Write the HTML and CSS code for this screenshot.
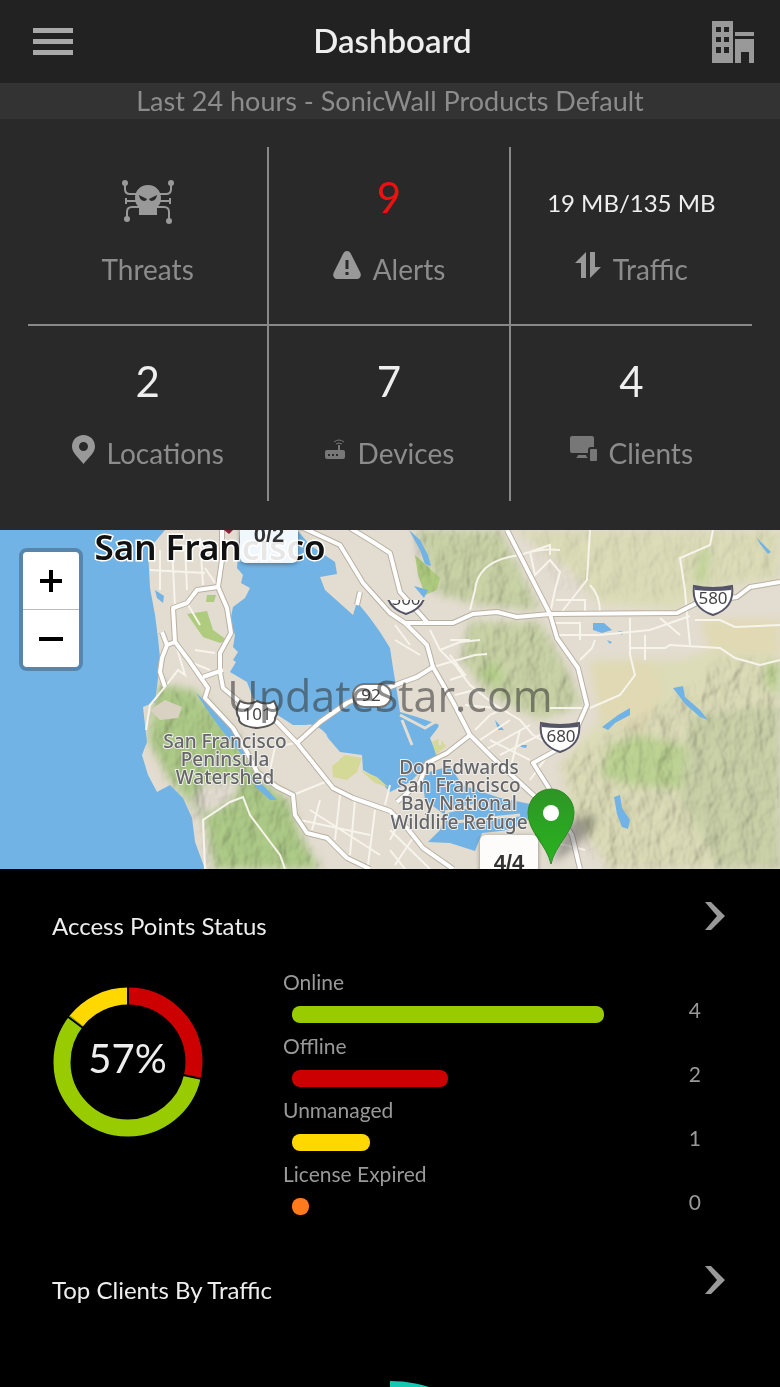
FILE: index.html
```html
<!DOCTYPE html>
<html lang="en">
<head>
    <meta charset="utf-8" />
    <meta name="viewport" content="width=device-width, initial-scale=1" />
    <title>Dashboard</title>
    <link rel="stylesheet" href="styles.css">
</head>

<body>
    <header class="topbar">
        <button class="icon-btn" type="button" aria-label="Menu">
            <svg width="40" height="28" viewBox="0 0 40 28" fill="#a9a9a9">
                <path d="M0 0h40v5H0zM0 11h40v5H0zM0 22h40v5H0z" />
            </svg>
        </button>
        <h1>Dashboard</h1>
        <button class="icon-btn" type="button" aria-label="Tenants">
            <svg width="42" height="42" viewBox="0 0 42 42" fill="#999" fill-rule="evenodd">
                <path d="M0 0h21v42H0zM4 6v5h5V6zM12 6v5h5V6zM4 16v5h5v-5zM12 16v5h5v-5zM4 26v6h5v-6zM12 26v6h5v-6z" />
                <path d="M23 11h19v4H23zM23 18h19v24h-5V31h-8v11h-6z" />
            </svg>
        </button>
    </header>

    <p class="period">Last 24 hours - SonicWall Products Default</p>

    <nav class="stats">
        <a class="stat" href="#threats">
            <span class="value value-low">
                <svg width="54" height="46" viewBox="0 0 54 46" fill="#999">
                    <g fill="none" stroke="#999" stroke-width="2">
                        <path d="M4 4v6q0 5 5 5h10M50 4v6q0 5-5 5H35M6 40v-7q0-5 5-5h10M48 42v-9q0-5-5-5H33" />
                        <path d="M5 22h12M37 22h12M5 19v6M49 19v6" />
                    </g>
                    <circle cx="4" cy="4" r="3" />
                    <circle cx="50" cy="4" r="3" />
                    <circle cx="6" cy="40" r="3" />
                    <circle cx="48" cy="42" r="3" />
                    <path d="M27 6c8 0 13 6 13 13 0 4-1 7-4 9v8H18v-8c-3-2-4-5-4-9C14 12 19 6 27 6z" />
                    <path d="M18 16l8 4c-1 3-7 3-8-4zM36 16l-8 4c1 3 7 3 8-4z" fill="#292929" />
                </svg>
            </span>
            <span class="label">Threats</span>
        </a>
        <a class="stat" href="#alerts">
            <span class="value value-alert">9</span>
            <span class="label">
                <svg width="28" height="28" viewBox="0 0 28 28">
                    <path d="M14 0c2 0 3 1 4 3l9 18c2 4 0 7-3 7H4c-3 0-5-3-3-7l9-18c1-2 2-3 4-3z" fill="#999" />
                    <path d="M14 9v9M14 21v3" stroke="#292929" stroke-width="3" />
                </svg>
                Alerts
            </span>
        </a>
        <a class="stat" href="#traffic">
            <span class="value value-low value-small">19 MB/135 MB</span>
            <span class="label">
                <svg width="26" height="28" viewBox="0 -1 26 28" fill="#999">
                    <path d="M11 0v26H6V11H0zM15 0h5v15h6L15 26z" />
                </svg>
                Traffic
            </span>
        </a>
        <a class="stat" href="#locations">
            <span class="value">2</span>
            <span class="label">
                <svg width="23" height="29" viewBox="0 0 23 29">
                    <path fill="#999" fill-rule="evenodd" d="M11.500 0C18 0 23 5 23 11.500 23 18 17 22 11.500 29 6 22 0 18 0 11.500 0 5 5 0 11.500 0zm0 7a4.500 4.500 0 1 0 0 9 4.500 4.500 0 1 0 0-9z" />
                </svg>
                Locations
            </span>
        </a>
        <a class="stat" href="#devices">
            <span class="value">7</span>
            <span class="label">
                <svg width="22" height="24" viewBox="-1 -4 22 24">
                    <path d="M2 11h11V6h2v5h3q2 0 2 2v5q0 2-2 2H2q-2 0-2-2v-5q0-2 2-2z" fill="#777" />
                    <path d="M3 15h2v2H3zM7 15h2v2H7zM11 15h2v2h-2z" fill="#292929" />
                    <path d="M9 3q5-4 10 0M11 5q3-2 6 0" fill="none" stroke="#777" />
                </svg>
                Devices
            </span>
        </a>
        <a class="stat" href="#clients">
            <span class="value">4</span>
            <span class="label">
                <svg width="27" height="26" viewBox="0 -1 27 26" fill="#777">
                    <path d="M2 0h20q2 0 2 2v9h-3q-3 0-3 3v3H2q-2 0-2-2V2q0-2 2-2zM8 19h8q1 3 2 3H6q1 0 2-3z" />
                    <rect x="20" y="13" width="7" height="12" rx="1" />
                </svg>
                Clients
            </span>
        </a>
    </nav>

    <section class="map" aria-label="Map">
        <svg class="map-tiles" viewBox="0 0 780 339" preserveAspectRatio="xMidYMid slice">
            <defs>
                <filter id="soft" x="-20%" y="-20%" width="140%" height="140%">
                    <feGaussianBlur stdDeviation="4" />
                </filter>
                <!-- hill shading -->
                <filter id="relief" x="0" y="0" width="100%" height="100%">
                    <feTurbulence type="fractalNoise" baseFrequency="0.06 0.04" numOctaves="3" seed="8" result="n" />
                    <feDiffuseLighting in="n" surfaceScale="6" lighting-color="#fff">
                        <feDistantLight azimuth="205" elevation="50" />
                    </feDiffuseLighting>
                </filter>
                <mask id="hillmask">
                    <g filter="url(#soft)" fill="#fff">
                        <path d="M158 150L195 165 240 205 262 250 290 270 300 300 325 339 205 339 192 285 160 240 148 200z" />
                        <path d="M415 0L500 0 540 80 480 75 440 65 420 50z" />
                        <path d="M470 92L540 92 568 140 580 175 540 185 490 165 460 130z" />
                        <path fill="#777" d="M520 0L780 0 780 45 700 55 660 70 600 65 560 60z" />
                        <path d="M690 160L720 130 780 130 780 339 600 339 575 290 560 235 590 215z" />
                    </g>
                </mask>
                <g id="highways" fill="none" stroke-linejoin="round">
                    <path d="M222 0V30L218 57 227 78 231 103 220 123 220 142 223 158 240 172 277 192 297 213 333 258 353 268 390 281 407 298 423 318 453 339" />
                    <path d="M218 57L197 60 187 73 173 78 175 112 190 132 208 158 205 168 233 198 247 222 257 242 277 257 293 265 295 285 307 303 327 308 347 328 370 339" />
                    <path d="M203 147L223 140M175 112L167 115 162 102M167 115L162 128 160 142 165 157" />
                    <path d="M297 213L320 192 347 173 360 167 390 157 417 147 433 137" />
                    <path d="M297-5L340 15 363 53 390 83 405 93 427 115 433 137 453 172 470 205 493 228 530 262 562 290 572 305 580 339" />
                    <path d="M350-2L373 12 390 23 400 62 427 92M405 93H453L473 84 497 82 517 87 550 84 677 83 697 73 737 67 750 57 780 52" />
                    <path d="M507 0L550 84 557 108 578 138 587 175 577 198 560 218 533 233 547 255 570 295" />
                    <path d="M470 205L447 223 427 233 420 252 397 272M357 75L360 62" />
                </g>
                <g id="shield">
                    <path d="M-19-13Q0-9 19-13Q22 9 0 16Q-22 9-19-13z" fill="#fff" stroke="#555568" stroke-width="2" />
                    <path d="M-18-13Q0-9 18-13V-9Q0-7-18-9z" fill="#555568" />
                </g>
                <clipPath id="tile-edge"><path d="M380 70h50v30h-50z" /></clipPath>
                <linearGradient id="pin" x2="0" y2="1">
                    <stop offset="0" stop-color="#2e9526" />
                    <stop offset="1" stop-color="#29b41f" />
                </linearGradient>
            </defs>

            <rect width="780" height="339" fill="#e3dcd0" />

            <!-- dry hills and parks -->
            <g filter="url(#soft)">
                <path fill="#dcdcb8" d="M515 0H780V50L700 60 680 80 600 75 570 40zM590 130L680 130 740 110 780 130V339H610L575 290 560 235 600 190z" />
                <path fill="#c9d3a6" d="M415 0H500L540 80 480 75 440 65zM470 92L540 92 568 140 582 175 540 190 490 165 460 130z" />
                <path fill="#e0d9b4" d="M590 135L650 130 665 160 640 205 600 190zM700 90L780 90 780 125 710 120z" />
                <path fill="#aecb88" d="M158 155L195 160 235 205 262 250 290 272 300 305 320 339 215 339 205 290 170 250 148 210z" />
                <path fill="#bdd393" d="M610 215L640 205 700 220 715 245 690 260 630 255 600 245zM765 135L780 130V165L765 155zM700 22L710 18 705 55 695 50z" />
                <path fill="#cbd2a9" d="M690 185L780 175V339H720L680 270z" />
                <path fill="#b4cf88" d="M477 145L495 130 505 155 485 150z" />
                <path fill="#e3dcd0" d="M205 252L240 250 235 268 205 285 192 270z" />
            </g>
            <path fill="#aecb7e" d="M187 84L207 81 213 100 227 110 220 113 203 107zM415 25L440 48 437 60 425 65 418 45zM207 65L216 65 214 72 206 72z" />

            <rect width="780" height="339" filter="url(#relief)" mask="url(#hillmask)" class="relief" />

            <!-- ocean, bay and lakes -->
            <g fill="#71b3e5">
                <path d="M0 0H165L148 20 150 58 155 85 158 108 160 128 158 148 155 172 143 177 145 195 147 212 142 225 148 245 157 262 170 255 183 268 192 288 195 312 205 339H0z" />
                <path d="M240 0H297L310 15 335 32 337 44 320 47 325 60 353 85 357 72 370 88 380 102 390 118 393 138 397 162 400 182 417 187 440 195 430 208 437 225 420 242 410 252 390 262 377 248 363 240 362 225 340 222 328 208 313 195 293 195 273 182 253 168 247 152 230 142 236 132 233 130 238 122 233 117 235 105 230 92 233 77 245 68 250 58 241 53 243 45 237 38z" />
                <path d="M422 244L450 236 462 255 500 268 530 274 528 290 510 300 482 303 475 321 450 313 428 312 440 300 445 285 425 270z" />
                <path d="M155 60L164 66 163 73 157 68zM196 163L210 175 223 188 245 220 243 226 227 207 212 187zM245 240L260 252 277 270 270 270 257 258z" />
                <path d="M409 0L420 10 428 25 431 36 425 34 420 20zM414 56L428 60 424 68zM593 93L604 93 612 100 602 103 593 100zM618 101L624 102 622 105zM607 110L612 112 610 114z" />
                <path d="M618 185L630 178 630 185 615 193 608 200 602 197zM673 158L683 156 685 167 700 180 708 190 700 187 685 174zM614 267L620 265 622 278 630 290 628 299 622 297 617 284zM757 8L771 22 768 24 760 14zM520 215L527 215 526 218 521 217zM495 190L504 200 498 200z" />
            </g>

            <!-- salt ponds and marshes -->
            <path fill="#d5d998" d="M332 236L345 225 362 228 357 242 347 250 333 247zM360 240L377 247 388 257 375 253zM432 212L440 208 446 216 436 225z" />
            <path fill="none" stroke="#e3dcd0" stroke-width="3" d="M300 200Q312 190 325 205Q330 215 318 222L305 214M335 217L320 240 338 230M400 185L425 198 435 192M402 190L412 215M440 190V215M445 282L475 275M455 292L520 285" />
            <path fill="#d9d2c2" d="M150 180L165 170 182 177 178 188 160 190z" />

            <!-- local streets -->
            <path class="streets" d="M150 40L205 43M160 20V60M172 15L175 78M185 15L187 60M200 8L203 55M205 38L218 57M187 73L200 95M175 112L185 145 178 140 165 157 150 175 146 200M190 132L210 140M195 120L215 123M205 339L203 290 230 272 243 267 250 285 265 305 280 325 285 339M295 213L275 217 270 240M293 265L330 250M300 290L370 305M320 270L312 300M340 265L335 310M355 270L350 325M375 280L368 335M310 280L380 325M390 255L385 275" />
            <path class="streets" d="M550 25L550 15 530 22 535 45 550 30 560 42 555 60 550 84M590 0L587 50 560 84M560 20Q540 18 520 25 478 30 475 60L470 80M590 55Q600 65 600 83M713 0L710 15 680 28 685 60 687 85 690 115M550 93H580L580 110M555 105H600L650 100 690 86M630 88V125 L635 145 620 165 590 178M645 105V130M630 118H665L670 115 720 118 735 128 760 135 780 130M660 88L680 105M695 90L720 90 735 97 780 95M580 130L592 118 595 110M556 70H585V84" />
            <path class="streets" d="M430 100L440 120 455 135 470 155 495 175 520 190 533 205 550 215M440 120L460 112 480 110M433 137L475 125 487 124M450 150L465 145 450 125M455 165L475 160M465 175L495 178M475 200L490 185 500 180M480 210L510 190M485 220L530 195M500 225L540 205M510 240L520 200M530 230L490 210M450 110H470M395 50L410 75M390 300L430 339M390 320L405 339M400 290L390 310M415 305L395 335M530 250L555 215M545 310L585 320M395 110L420 125M395 95L410 115M550 178H587" />

            <use href="#highways" stroke="#b9b0a3" stroke-width="6" />
            <use href="#highways" stroke="#fff" stroke-width="4" />

            <!-- road shields -->
            <use href="#shield" x="713" y="69" />
            <use href="#shield" x="560" y="206" />
            <g clip-path="url(#tile-edge)">
                <use href="#shield" x="406" y="68" />
                <text class="shield-text" x="406" y="75">500</text>
            </g>
            <path d="M240 171Q248 176 257 171 267 176 274 171 280 181 275 188 276 196 257 198 238 196 239 188 234 181 240 171z" fill="#fff" stroke="#555" stroke-width="2" />
            <rect x="353" y="154" width="38" height="23" rx="11" fill="#fff" stroke="#777" stroke-width="2" />
            <text class="shield-text" x="713" y="74">580</text>
            <text class="shield-text" x="561" y="212">680</text>
            <text class="shield-text" x="257" y="190">101</text>
            <text class="shield-text" x="371" y="171">92</text>

            <!-- place names -->
            <text class="city" x="210" y="30">San Francisco</text>
            <g class="place">
                <text x="225" y="218">San Francisco</text>
                <text x="225" y="236">Peninsula</text>
                <text x="225" y="254">Watershed</text>
                <text x="459" y="244">Don Edwards</text>
                <text x="459" y="262">San Francisco</text>
                <text x="459" y="280">Bay National</text>
                <text x="459" y="299">Wildlife Refuge</text>
            </g>

            <!-- markers -->
            <path d="M224 0h9l-4 4z" fill="#8c1f3a" />
            <path d="M552 333L566 295Q590 280 597 288 590 310 552 333z" fill="#333" opacity=".4" filter="url(#soft)" />
            <path d="M551 334C547 315 528 302 528 283A23 24 0 0 1 574 283C574 302 555 315 551 334z" fill="url(#pin)" stroke="#2c8a25" />
            <circle cx="551" cy="283" r="8" fill="#fff" />
        </svg>

        <span class="tip tip-north">0/2</span>
        <span class="tip tip-south">4/4</span>

        <div class="zoom">
            <button type="button" aria-label="Zoom in">
                <svg width="24" height="24" viewBox="0 0 24 24"><path d="M12 1v22M1 12h22" stroke="#000" stroke-width="4" /></svg>
            </button>
            <button type="button" aria-label="Zoom out">
                <svg width="24" height="24" viewBox="0 0 24 24"><path d="M0 12h24" stroke="#000" stroke-width="4" /></svg>
            </button>
        </div>

        <span class="watermark">UpdateStar.com</span>
    </section>

    <section class="panel">
        <div class="panel-head">
            <h2>Access Points Status</h2>
            <a class="more" href="#access-points" aria-label="Access Points Status">
                <svg width="20" height="28" viewBox="0 0 20 28"><path d="M0 0h6l14 14L6 28H0l12-14z" fill="#999" /></svg>
            </a>
        </div>
        <div class="status">
            <div class="donut">
                <!-- circumference set to 7, one unit per access point -->
                <svg width="150" height="150" viewBox="0 0 150 150" fill="none" stroke-width="17">
                    <g transform="rotate(-90 75 75)">
                        <circle cx="75" cy="75" r="66" pathLength="7" stroke="#c00" stroke-dasharray="2 5" />
                        <circle cx="75" cy="75" r="66" pathLength="7" stroke="#9c0" stroke-dasharray="4 3" stroke-dashoffset="-2" />
                        <circle cx="75" cy="75" r="66" pathLength="7" stroke="#ffd800" stroke-dasharray="1 6" stroke-dashoffset="-6" />
                    </g>
                    <path d="M75 0v18M130 88l19 4M14 29l16 12" stroke="#000" stroke-width="2" />
                </svg>
                <span class="percent">57%</span>
            </div>
            <ul class="bars">
                <li>
                    <span class="name">Online</span>
                    <span class="track"><span class="bar online" style="width: 100%"></span></span>
                    <span class="count">4</span>
                </li>
                <li>
                    <span class="name">Offline</span>
                    <span class="track"><span class="bar offline" style="width: 50%"></span></span>
                    <span class="count">2</span>
                </li>
                <li>
                    <span class="name">Unmanaged</span>
                    <span class="track"><span class="bar unmanaged" style="width: 25%"></span></span>
                    <span class="count">1</span>
                </li>
                <li>
                    <span class="name">License Expired</span>
                    <span class="track"><span class="bar expired" style="width: 0%"></span></span>
                    <span class="count">0</span>
                </li>
            </ul>
        </div>
    </section>

    <section class="panel panel-last">
        <div class="panel-head">
            <h2>Top Clients By Traffic</h2>
            <a class="more" href="#top-clients" aria-label="Top Clients By Traffic">
                <svg width="20" height="28" viewBox="0 0 20 28"><path d="M0 0h6l14 14L6 28H0l12-14z" fill="#999" /></svg>
            </a>
        </div>
        <div class="traffic-chart">
            <svg width="260" height="260" viewBox="0 0 260 260"><path d="M130 0a130 130 0 0 1 130 130h-30a100 100 0 0 0-100-100z" fill="#14c8b4" /></svg>
        </div>
    </section>
</body>
</html>
```
FILE: styles.css
```css
* {
    box-sizing: border-box;
    margin: 0;
    padding: 0;
}

body {
    display: flex;
    flex-direction: column;
    height: 100vh;
    overflow: hidden;
    background-color: #000;
    color: #eee;
    font-family: Lato, "Noto Sans", sans-serif;
}

body > * {
    flex-shrink: 0;
}

svg {
    display: block;
}

a {
    color: inherit;
    text-decoration: none;
}

button {
    border: none;
    background: none;
    cursor: pointer;
}

/* top bar */
.topbar {
    display: flex;
    justify-content: space-between;
    align-items: center;
    height: 83px;
    padding: 0 26px 0 33px;
    background-color: #222;
}

.topbar h1 {
    padding-bottom: 4px;
    font-size: 33px;
    font-weight: 600;
}

.period {
    background-color: #333;
    color: #8c8c8c;
    font-size: 27px;
    font-weight: 400;
    line-height: 36px;
    text-align: center;
}

/* counters */
.stats {
    display: grid;
    grid-template-columns: repeat(3, 1fr);
    padding: 28px 28px 29px;
    background-color: #292929;
}

.stat {
    display: flex;
    flex-direction: column;
    align-items: center;
    gap: 26px;
    height: 177px;
    padding-top: 22px;
    border-right: 2px solid #888;
}

.stat:nth-child(3n) {
    border-right: none;
}

.stat:nth-child(n+4) {
    padding-top: 27px;
    border-top: 2px solid #888;
}

.value {
    display: flex;
    align-items: center;
    height: 56px;
    font-size: 42px;
}

.value-low {
    padding-top: 10px;
}

.value-small {
    font-size: 24px;
}

.value-alert {
    color: #f01010;
}

.label {
    display: flex;
    align-items: flex-start;
    gap: 12px;
    color: #8c8c8c;
    font-size: 28px;
    line-height: 36px;
}

/* map */
.map {
    position: relative;
    height: 339px;
    overflow: hidden;
}

.map-tiles {
    width: 100%;
    height: 100%;
}

.relief {
    mix-blend-mode: multiply;
    opacity: 0.3;
}

.streets {
    fill: none;
    stroke: #f7f4ec;
    stroke-width: 2;
}

.shield-text,
.city,
.place {
    font-family: "Noto Sans", sans-serif;
    text-anchor: middle;
}

.shield-text {
    fill: #444;
    font-size: 17px;
}

.city {
    fill: #111;
    stroke: #fff;
    stroke-width: 3px;
    paint-order: stroke;
    font-size: 35px;
    font-weight: 600;
}

.place {
    fill: #666;
    stroke: #eee;
    stroke-width: 2px;
    paint-order: stroke;
    font-size: 19px;
    font-weight: 500;
}

.tip {
    position: absolute;
    width: 58px;
    height: 48px;
    border-radius: 6px;
    background-color: rgba(255, 255, 255, 0.9);
    box-shadow: 0 1px 4px rgba(0, 0, 0, 0.4);
    color: #333;
    font-family: "Liberation Sans", sans-serif;
    font-size: 22px;
    font-weight: bold;
    line-height: 40px;
    text-align: center;
}

.tip-north {
    top: -15px;
    left: 240px;
}

.tip-south {
    top: 305px;
    left: 480px;
    line-height: 56px;
}

.zoom {
    position: absolute;
    top: 18px;
    left: 19px;
    border: 4px solid rgba(60, 90, 120, 0.5);
    border-radius: 8px;
    background-clip: padding-box;
}

.zoom button {
    display: flex;
    justify-content: center;
    align-items: center;
    width: 56px;
    height: 57px;
    background-color: #fff;
    border-radius: 0 0 4px 4px;
}

.zoom button:first-child {
    height: 58px;
    border-bottom: 1px solid #bbb;
    border-radius: 4px 4px 0 0;
}

.watermark {
    position: absolute;
    inset: 0;
    color: rgba(50, 50, 50, 0.55);
    font-family: "Open Sans", sans-serif;
    font-size: 43px;
    line-height: 332px;
    text-align: center;
    pointer-events: none;
}

/* panels */
.panel {
    height: 364px;
    padding: 33px 52px 0;
}

.panel-head {
    display: flex;
    justify-content: space-between;
}

.panel h2 {
    margin-top: 8px;
    font-size: 24px;
    font-weight: 400;
    line-height: 32px;
}

.more {
    padding-right: 3px;
}

.status {
    display: flex;
    gap: 80px;
    padding-top: 26px;
}

.donut {
    display: grid;
    place-items: center;
    align-self: flex-start;
    margin-top: 19px;
    width: 151px;
}

.donut > * {
    grid-area: 1 / 1;
}

.percent {
    font-size: 40px;
    line-height: 44px;
    padding-bottom: 8px;
}

.bars {
    flex: 1;
    list-style: none;
}

.bars li {
    display: grid;
    grid-template-columns: 1fr 124px;
    grid-template-rows: 26px 1fr;
    height: 64px;
    color: #999;
    font-size: 21px;
}

.name {
    grid-column: 1 / 3;
    line-height: 28px;
}

.track {
    padding: 12px 0 0 9px;
}

.bar {
    display: block;
    min-width: 17px;
    height: 17px;
    border-radius: 8px;
}

.online {
    background-color: #9c0;
}

.offline {
    background-color: #c00;
}

.unmanaged {
    background-color: #ffd800;
}

.expired {
    background-color: #ff7a1c;
}

.count {
    padding-right: 27px;
    line-height: 32px;
    text-align: right;
}

.panel-last {
    flex: 1 1 0;
    height: auto;
    overflow: hidden;
}

.traffic-chart {
    display: flex;
    justify-content: center;
    padding-top: 75px;
}
```
